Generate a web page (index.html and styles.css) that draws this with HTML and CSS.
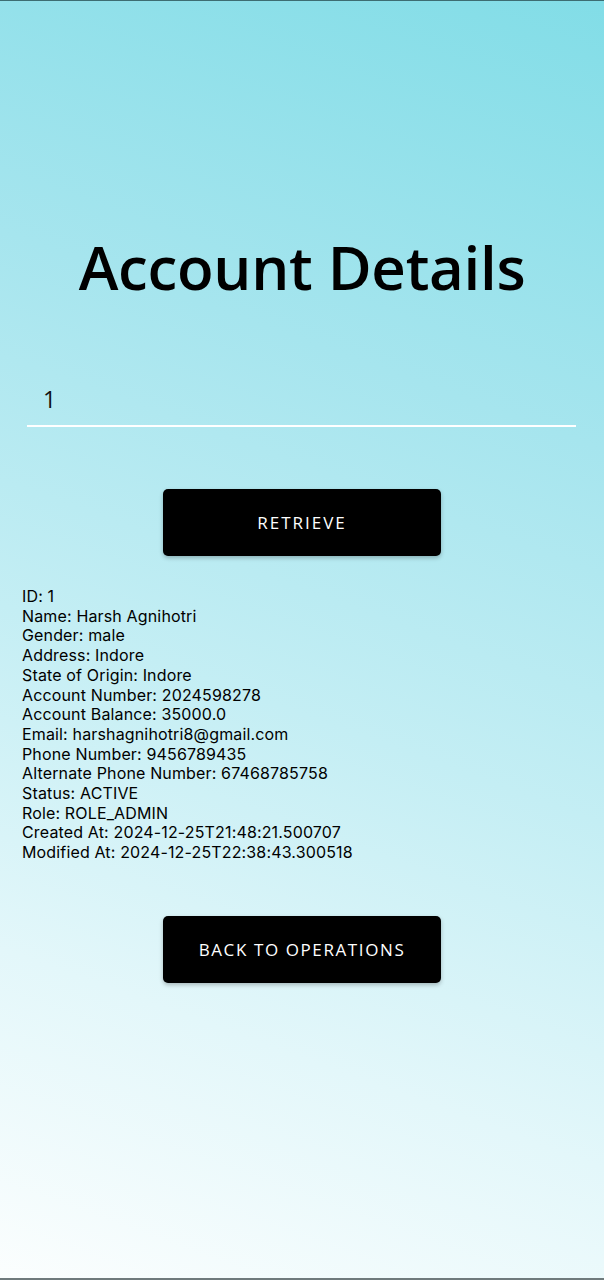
FILE: index.html
```html
<!DOCTYPE html>
<html>
<head>
<meta charset="utf-8">
<link rel="stylesheet" href="styles.css">
</head>
<body>
<div class="screen">
  <h1 class="title">Account Details</h1>
  <div class="field">
    <div class="field-value">1</div>
  </div>
  <div class="btn-row retrieve-row">
    <button class="btn">RETRIEVE</button>
  </div>
  <div class="details">
    <div>ID: 1</div>
    <div>Name: Harsh Agnihotri</div>
    <div>Gender: male</div>
    <div>Address: Indore</div>
    <div>State of Origin: Indore</div>
    <div>Account Number: 2024598278</div>
    <div>Account Balance: 35000.0</div>
    <div>Email: harshagnihotri8@gmail.com</div>
    <div>Phone Number: 9456789435</div>
    <div>Alternate Phone Number: 67468785758</div>
    <div>Status: ACTIVE</div>
    <div>Role: ROLE_ADMIN</div>
    <div>Created At: 2024-12-25T21:48:21.500707</div>
    <div>Modified At: 2024-12-25T22:38:43.300518</div>
  </div>
  <div class="btn-row back-row">
    <button class="btn">BACK TO OPERATIONS</button>
  </div>
</div>
</body>
</html>
```

FILE: styles.css
```css
html, body {
  margin: 0;
  padding: 0;
}
body {
  width: 604px;
  height: 1280px;
  overflow: hidden;
  font-family: "Open Sans", "Noto Sans", sans-serif;
}
.screen {
  box-sizing: border-box;
  width: 604px;
  height: 1280px;
  border-top: 1px solid #3d6d72;
  border-bottom: 2px solid #6f7a7c;
  background: linear-gradient(200deg, #82dde7 0%, #a6e5ee 30%, #c4eef4 55%, #e3f7fa 78%, #fbfefe 100%);
  display: flex;
  flex-direction: column;
}
.title {
  margin: 228px 0 0 0;
  text-align: center;
  font-size: 60px;
  font-weight: 600;
  line-height: 76px;
  color: #000;
  letter-spacing: -0.3px;
}
.field {
  margin: 78px 28px 0 27px;
  border-bottom: 2px solid #ffffff;
  padding: 0 0 10px 16px;
}
.field-value {
  font-size: 23px;
  line-height: 32px;
  color: #111;
}
.btn-row {
  display: flex;
  justify-content: center;
}
.retrieve-row {
  margin-top: 62px;
}
.back-row {
  margin-top: 53px;
}
.btn {
  width: 278px;
  height: 67px;
  border: none;
  border-radius: 5px;
  background: #000;
  color: #fff;
  font-family: "Open Sans", "Noto Sans", sans-serif;
  font-size: 17px;
  letter-spacing: 1.6px;
  box-shadow: 0 2px 4px rgba(0,0,0,0.25);
  padding: 0;
}
.retrieve-row .btn {
  letter-spacing: 2px;
}
.details {
  margin: 31px 0 0 22px;
  font-family: Inter, "Open Sans", sans-serif;
  font-size: 16px;
  letter-spacing: 0.15px;
  line-height: 19.7px;
  color: #000;
}
```
